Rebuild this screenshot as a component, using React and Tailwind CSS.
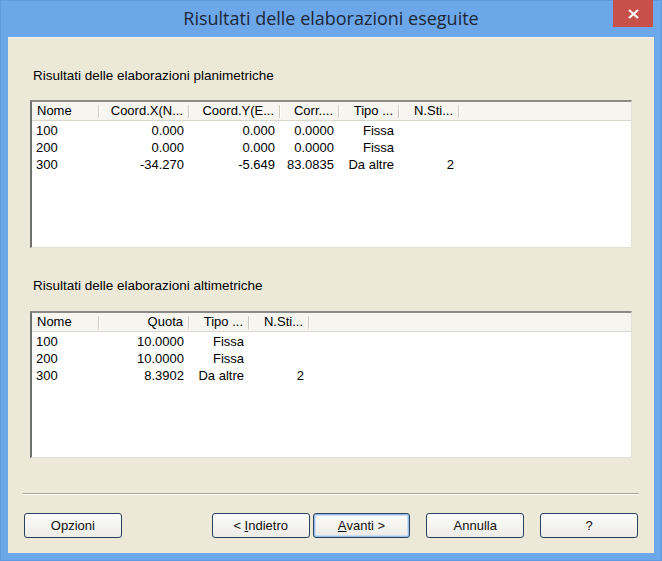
import React from "react";

const planCols = [
  { label: "Nome", w: 68, align: "left" },
  { label: "Coord.X(N...", w: 90, align: "right" },
  { label: "Coord.Y(E...", w: 91, align: "right" },
  { label: "Corr....", w: 59, align: "right" },
  { label: "Tipo ...", w: 60, align: "right" },
  { label: "N.Sti...", w: 60, align: "right" },
];

const planRows = [
  ["100", "0.000", "0.000", "0.0000", "Fissa", ""],
  ["200", "0.000", "0.000", "0.0000", "Fissa", ""],
  ["300", "-34.270", "-5.649", "83.0835", "Da altre", "2"],
];

const altCols = [
  { label: "Nome", w: 68, align: "left" },
  { label: "Quota", w: 90, align: "right" },
  { label: "Tipo ...", w: 60, align: "right" },
  { label: "N.Sti...", w: 60, align: "right" },
];

const altRows = [
  ["100", "10.0000", "Fissa", ""],
  ["200", "10.0000", "Fissa", ""],
  ["300", "8.3902", "Da altre", "2"],
];

const ListView = ({ cols, rows, height }) => (
  <div
    className="bg-white border-t-2 border-l-2 border-t-[#8a8a86] border-l-[#6f6f6c] border-b border-r border-b-[#e4e2d8] border-r-[#e4e2d8] overflow-hidden"
    style={{ height }}
  >
    <div className="flex h-[19px] bg-[#f6f5f0] border-b border-[#d9d7cc]">
      {cols.map((c, i) => (
        <div
          key={i}
          className={`relative flex items-center px-[5px] whitespace-nowrap ${
            c.align === "right" ? "justify-end" : "justify-start"
          }`}
          style={{ width: c.w }}
        >
          <span className="pr-[2px]">{c.label}</span>
          <div className="absolute right-0 top-[3px] h-[13px] w-[2px] border-l border-[#cfccbd] bg-white" />
        </div>
      ))}
      <div className="flex-1" />
    </div>
    <div className="pt-[1px]">
      {rows.map((r, ri) => (
        <div key={ri} className="flex h-[17px] items-center">
          {r.map((v, ci) => (
            <div
              key={ci}
              className={`px-[5px] whitespace-nowrap ${
                cols[ci].align === "right" ? "text-right pr-[6px]" : "text-left pl-[4px]"
              }`}
              style={{ width: cols[ci].w }}
            >
              {v}
            </div>
          ))}
        </div>
      ))}
    </div>
  </div>
);

const Btn = ({ children, def, className = "" }) => (
  <button
    className={`h-[25px] w-[98px] rounded-[3px] border border-[#27415f] bg-gradient-to-b from-[#fdfdfc] to-[#ecebe6] text-[13px] text-[#111] flex items-center justify-center ${
      def ? "shadow-[inset_0_0_0_1px_#9cbde6,inset_0_0_0_2px_#c9dcf3]" : ""
    } ${className}`}
  >
    {children}
  </button>
);

export default function App() {
  return (
    <div
      className="w-[662px] h-[561px] bg-[#6ca7ea] flex flex-col border border-[#5e9be0] text-[13px] text-black"
      style={{ fontFamily: '"Liberation Sans", Arial, sans-serif' }}
    >
      <div className="relative h-[36px] flex items-center justify-center">
        <span
          className="text-[18px] text-[#1c2738] -mt-[2px]"
          style={{ fontFamily: '"Open Sans", "Noto Sans", sans-serif' }}
        >
          Risultati delle elaborazioni eseguite
        </span>
        <div className="absolute right-[8px] -top-[1px] w-[40px] h-[27px] bg-[#c7504b] flex items-center justify-center">
          <svg width="11" height="10" viewBox="0 0 11 10">
            <path d="M1 1 L10 9 M10 1 L1 9" stroke="white" strokeWidth="2.2" />
          </svg>
        </div>
      </div>
      <div className="flex-1 mx-[7px] mb-[7px] bg-[#ece9d8] flex flex-col px-[22px] border-t border-[#f5f3ea]">
        <div className="mt-[31px] pl-[3px] h-[14px] leading-[14px] text-[13.5px]">
          Risultati delle elaborazioni planimetriche
        </div>
        <div className="mt-[17px]">
          <ListView cols={planCols} rows={planRows} height={148} />
        </div>
        <div className="mt-[31px] pl-[3px] h-[14px] leading-[14px] text-[13.5px]">
          Risultati delle elaborazioni altimetriche
        </div>
        <div className="mt-[18px]">
          <ListView cols={altCols} rows={altRows} height={147} />
        </div>
        <div className="mt-[35px] -mx-[7px] h-[2px] border-t border-[#aca899] border-b border-b-white" />
        <div className="mt-[18px] flex -mx-[6px]">
          <Btn>Opzioni</Btn>
          <Btn className="ml-[90px]">
            &lt;&nbsp;<span className="underline">I</span>ndietro
          </Btn>
          <Btn def className="ml-[3px]">
            <span className="underline">A</span>vanti &gt;
          </Btn>
          <Btn className="ml-[16px]">Annulla</Btn>
          <Btn className="ml-[16px]">?</Btn>
        </div>
      </div>
    </div>
  );
}
